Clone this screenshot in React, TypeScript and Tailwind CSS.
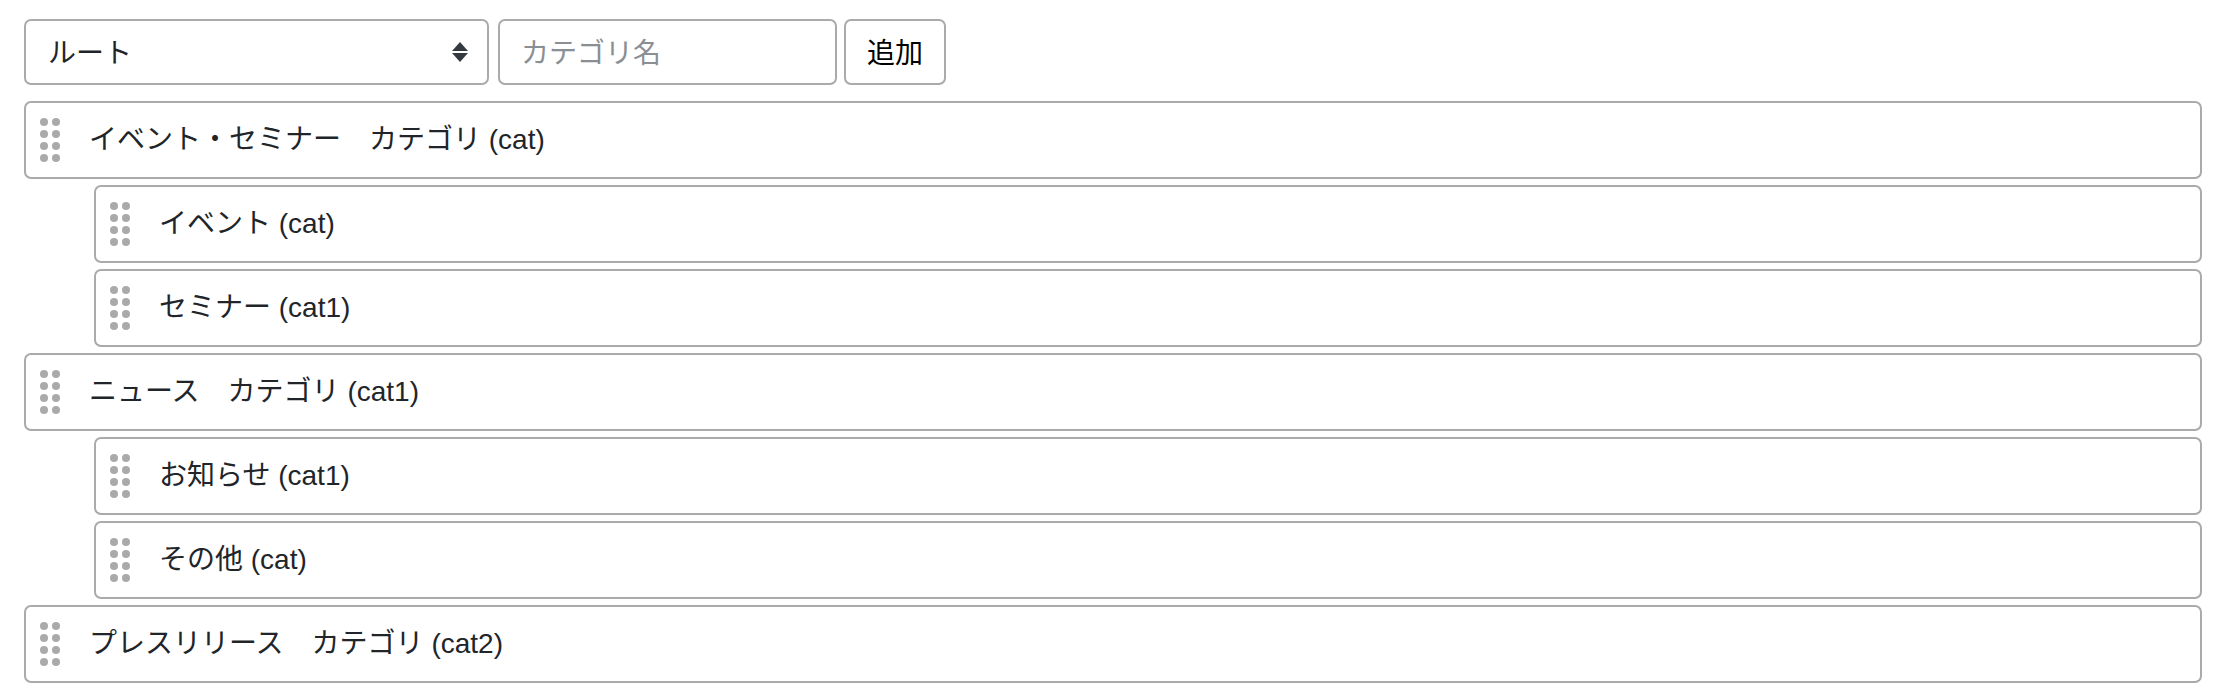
import React from "react";

interface Category {
  label: string;
  children?: Category[];
}

const CATEGORIES: Category[] = [
  {
    label: "イベント・セミナー　カテゴリ (cat)",
    children: [{ label: "イベント (cat)" }, { label: "セミナー (cat1)" }],
  },
  {
    label: "ニュース　カテゴリ (cat1)",
    children: [{ label: "お知らせ (cat1)" }, { label: "その他 (cat)" }],
  },
  { label: "プレスリリース　カテゴリ (cat2)" },
];

function DragHandle() {
  return (
    <div className="grid grid-cols-2 gap-[4px] shrink-0 w-[20px]" aria-hidden="true">
      {Array.from({ length: 8 }).map((_, i) => (
        <span key={i} className="block w-[8px] h-[8px] rounded-full bg-[#aaaaaa]" />
      ))}
    </div>
  );
}

function CategoryRow({ label, nested }: { label: string; nested?: boolean }) {
  return (
    <div
      className={`flex items-center h-[78px] border-2 border-[#aaaaaa] rounded-[7px] bg-white px-[14px] ${
        nested ? "ml-[70px]" : ""
      }`}
    >
      <DragHandle />
      <span className="ml-[29px] text-[28px] leading-[42px] text-[#212529]">{label}</span>
    </div>
  );
}

export default function App() {
  return (
    <div className="min-h-screen bg-white pl-[24px] pr-[38px] pt-[19px] font-['Liberation_Sans','Noto_Sans_CJK_JP',sans-serif]">
      <div className="flex items-center">
        <div className="relative w-[465px] h-[66px]">
          <select className="appearance-none w-full h-full border-2 border-[#aaaaaa] rounded-[7px] bg-white pl-[22px] pr-[50px] pt-[4px] text-[28px] text-[#212529] outline-none">
            <option>ルート</option>
          </select>
          <svg
            className="pointer-events-none absolute right-[21px] top-[23px]"
            width="16"
            height="20"
            viewBox="0 0 16 20"
            aria-hidden="true"
          >
            <polygon points="0,9 8,0 16,9" fill="#343a40" />
            <polygon points="0,11 16,11 8,20" fill="#343a40" />
          </svg>
        </div>
        <input
          className="ml-[9px] w-[339px] h-[66px] border-2 border-[#aaaaaa] rounded-[7px] bg-white px-[21px] pt-[3px] text-[28px] text-[#212529] placeholder:text-[#8a8f94] outline-none"
          placeholder="カテゴリ名"
        />
        <button className="ml-[7px] w-[102px] h-[66px] border-2 border-[#aaaaaa] rounded-[7px] bg-white pt-[3px] text-[28px] text-black">
          追加
        </button>
      </div>

      <div className="mt-[16px] flex flex-col gap-[6px]">
        {CATEGORIES.map((cat) => (
          <React.Fragment key={cat.label}>
            <CategoryRow label={cat.label} />
            {cat.children?.map((child) => (
              <CategoryRow key={child.label} label={child.label} nested />
            ))}
          </React.Fragment>
        ))}
      </div>
    </div>
  );
}
